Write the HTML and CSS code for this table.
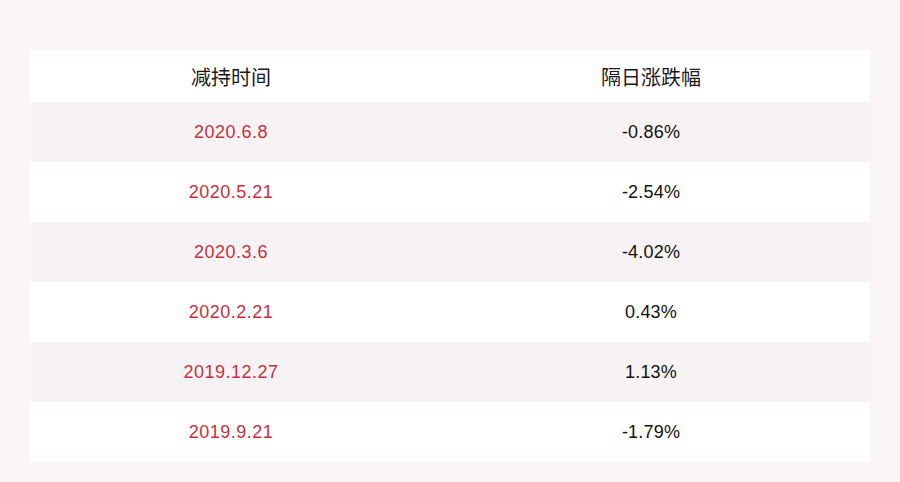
FILE: index.html
```html
<!DOCTYPE html>
<html lang="zh">
<head>
<meta charset="utf-8">
<link rel="stylesheet" href="styles.css">
</head>
<body>
<div class="page">
  <div class="table">
    <div class="row head">
      <div class="cell">减持时间</div>
      <div class="cell">隔日涨跌幅</div>
    </div>
    <div class="row alt">
      <div class="cell date">2020.6.8</div>
      <div class="cell">-0.86%</div>
    </div>
    <div class="row">
      <div class="cell date">2020.5.21</div>
      <div class="cell">-2.54%</div>
    </div>
    <div class="row alt">
      <div class="cell date">2020.3.6</div>
      <div class="cell">-4.02%</div>
    </div>
    <div class="row">
      <div class="cell date">2020.2.21</div>
      <div class="cell">0.43%</div>
    </div>
    <div class="row alt">
      <div class="cell date">2019.12.27</div>
      <div class="cell">1.13%</div>
    </div>
    <div class="row">
      <div class="cell date">2019.9.21</div>
      <div class="cell">-1.79%</div>
    </div>
  </div>
</div>
</body>
</html>
```

FILE: styles.css
```css
html, body {
  margin: 0;
  padding: 0;
}
body {
  width: 900px;
  height: 482px;
  background: #f9f4f5;
  font-family: "Liberation Sans", Arial, "Noto Sans CJK SC", sans-serif;
  overflow: hidden;
}
.page {
  padding: 50px 30px 0 30px;
}
.table {
  display: flex;
  flex-direction: column;
  width: 840px;
}
.row {
  display: grid;
  grid-template-columns: 420px 420px;
  height: 60px;
  background: #ffffff;
}
.row.alt {
  background: #f7f3f4;
}
.row.head {
  height: 52px;
  background: #ffffff;
}
.cell {
  display: flex;
  align-items: center;
  justify-content: center;
  padding-right: 18px;
  padding-top: 1px;
  font-size: 18px;
  color: #111111;
  letter-spacing: 0.2px;
}
.head .cell {
  font-family: "Noto Sans CJK SC", sans-serif;
  font-size: 20px;
  font-weight: 400;
  color: #1a1a1a;
  letter-spacing: 0;
  padding-top: 0;
}
.date {
  color: #c7303b;
  letter-spacing: 0.5px;
}
```
